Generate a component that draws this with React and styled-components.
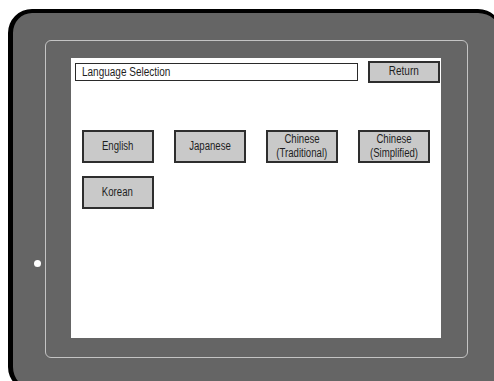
import React from 'react';
import styled, { createGlobalStyle } from 'styled-components';

const GlobalStyle = createGlobalStyle`
  html, body {
    margin: 0;
    padding: 0;
    background: #fff;
    overflow: hidden;
  }
  body {
    font-family: "Liberation Sans", Arial, sans-serif;
  }
`;

const languages = [
  ['English'],
  ['Japanese'],
  ['Chinese', '(Traditional)'],
  ['Chinese', '(Simplified)'],
  ['Korean'],
];

export default function App() {
  return (
    <>
      <GlobalStyle />
      <Device>
        <Led />
        <Bezel>
          <Screen>
            <TitleRow>
              <TitleBox>
                <Narrow $origin="left">Language Selection</Narrow>
              </TitleBox>
              <ReturnButton>
                <Narrow>Return</Narrow>
              </ReturnButton>
            </TitleRow>
            <LangGrid>
              {languages.map((lines, i) => (
                <Button key={i}>
                  {lines.map(l => (
                    <Narrow key={l}>{l}</Narrow>
                  ))}
                </Button>
              ))}
            </LangGrid>
          </Screen>
        </Bezel>
      </Device>
    </>
  );
}

const Device = styled.div`
  position: relative;
  box-sizing: border-box;
  margin: 9px 0 0 8px;
  width: 494px;
  height: 382px;
  background: #656565;
  border-style: solid;
  border-color: #000;
  border-width: 4px 2px 3px 5px;
  border-radius: 24px;
  padding: 27px 0 0 32px;
`;

const Led = styled.div`
  position: absolute;
  left: 21px;
  top: 247px;
  width: 7px;
  height: 7px;
  border-radius: 50%;
  background: #fff;
`;

const Bezel = styled.div`
  box-sizing: border-box;
  width: 423px;
  height: 318px;
  border: 1.5px solid #c4c4c4;
  border-radius: 6px;
  padding: 17px 25px 0 24.5px;
`;

const Screen = styled.div`
  box-sizing: border-box;
  width: 370px;
  height: 280px;
  background: #fff;
  padding: 3px 1px 0 4px;
`;

const TitleRow = styled.div`
  display: flex;
  align-items: center;
  gap: 10px;
  height: 22px;
`;

const Narrow = styled.span`
  display: block;
  white-space: nowrap;
  transform: scaleX(0.8);
  transform-origin: ${p => p.$origin || 'center'};
`;

const TitleBox = styled.div`
  box-sizing: border-box;
  width: 284px;
  height: 18px;
  border: 1px solid #2a2a2a;
  padding: 0 6px;
  font-size: 12.5px;
  line-height: 16px;
  color: #1e1e1e;
`;

const Button = styled.div`
  box-sizing: border-box;
  display: flex;
  flex-direction: column;
  align-items: center;
  justify-content: center;
  background: #c9c9c9;
  border: 2px solid #2e2e2e;
  color: #1e1e1e;
  font-size: 12px;
  line-height: 13.6px;
`;

const ReturnButton = styled(Button)`
  width: 72px;
  height: 22px;
  font-size: 12.5px;
`;

const LangGrid = styled.div`
  display: grid;
  grid-template-columns: repeat(4, 72px);
  grid-auto-rows: 33px;
  column-gap: 20.3px;
  row-gap: 13px;
  margin: 47px 0 0 7px;
`;
